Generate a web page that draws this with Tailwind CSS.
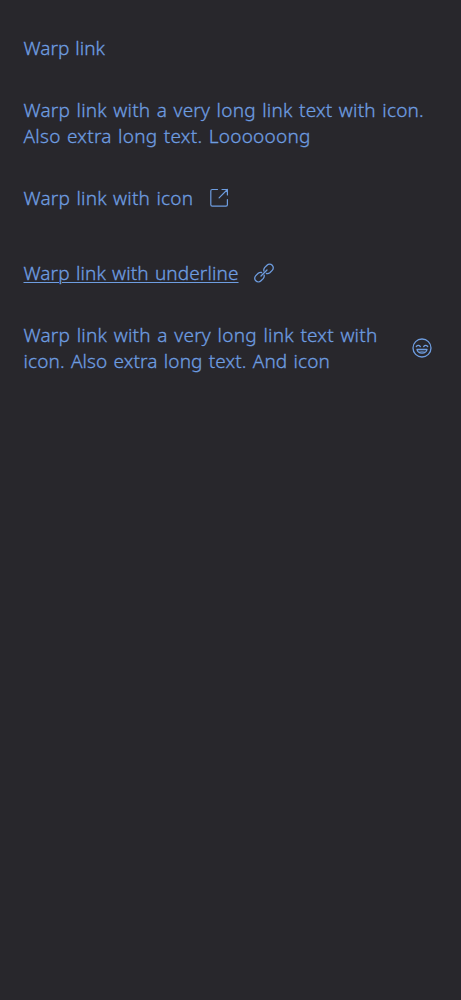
<!DOCTYPE html>
<html lang="en">
<head>
<meta charset="utf-8">
<title>Warp link</title>
<script src="https://cdn.jsdelivr.net/npm/@tailwindcss/browser@4"></script>
</head>
<body class="bg-[#28272c]">
<main class="min-h-screen pl-[23.5px] pt-[35px] font-['Noto_Sans',sans-serif] font-light [-webkit-text-stroke:0.3px_currentColor] text-[19px] leading-[26px] text-[#6e9de0] whitespace-nowrap">
  <a class="block h-[26px]"><span class="tracking-[0.05px] [word-spacing:0.8px]">Warp link</span></a>
  <a class="mt-9 block"><span class="tracking-[0.2px] [word-spacing:1.3px]">Warp link with a very long link text with icon.</span><br><span class="tracking-[0.25px] [word-spacing:1.2px]">Also extra long text. Loooooong</span></a>
  <a class="mt-9 flex h-[26px] items-center"><span class="w-[186.5px] tracking-[0.2px] [word-spacing:1.2px]">Warp link with icon</span>
    <svg class="size-[20px]" viewBox="0 0 20 20" fill="none" stroke="currentColor" stroke-width="1.2" stroke-linecap="round" stroke-linejoin="round"><path d="M7.5 1.500h-5.300Q.8 1.500.8 3v13.800Q.8 18.200 2.200 18.200h13.800Q17.400 18.200 17.400 16.800V11.500M12 1.500h5.400V7M17.400 1.500L9.100 9.800"/></svg></a>
  <a class="mt-[49px] flex h-[26px] items-center"><span class="w-[230.500px]"><span class="tracking-[0.1px] [word-spacing:1.2px] underline underline-offset-2 decoration-[1.3px]">Warp link with underline</span></span>
    <svg class="size-[20px]" viewBox="0 0 20 20" fill="none" stroke="currentColor" stroke-width="1.3" stroke-linecap="round" stroke-linejoin="round"><path d="M7 13l6-6M9.800 7.800a4 4 0 0 1 .8-3.200l2.400-2.400a3.650 3.650 0 0 1 5.200 5.200l-2.400 2.400a4 4 0 0 1-3.400.700M10.200 12.200a4 4 0 0 1-.8 3.200l-2.400 2.400a3.650 3.650 0 0 1-5.200-5.200l2.400-2.400a4 4 0 0 1 3.400-.700"/></svg></a>
  <a class="mt-9 flex items-center"><span class="w-[388.500px]"><span class="tracking-[0.2px] [word-spacing:1.5px]">Warp link with a very long link text with</span><br><span class="tracking-[0.1px] [word-spacing:1.2px]">icon. Also extra long text. And icon</span></span>
    <svg class="size-[20px] shrink-0" viewBox="0 0 20 20" fill="none" stroke="currentColor" stroke-width="1.3" stroke-linecap="round" stroke-linejoin="round"><circle cx="10" cy="10" r="9"/><path d="M4.300 8.500q2-2.300 4 0M11.700 8.500q2-2.300 4 0M5 11.500h10c-.8 4.800-9.200 4.800-10 0z"/><path stroke-width=".8" d="M7.500 14q2.500-.6 5 0"/></svg></a>
</main>
</body>
</html>
